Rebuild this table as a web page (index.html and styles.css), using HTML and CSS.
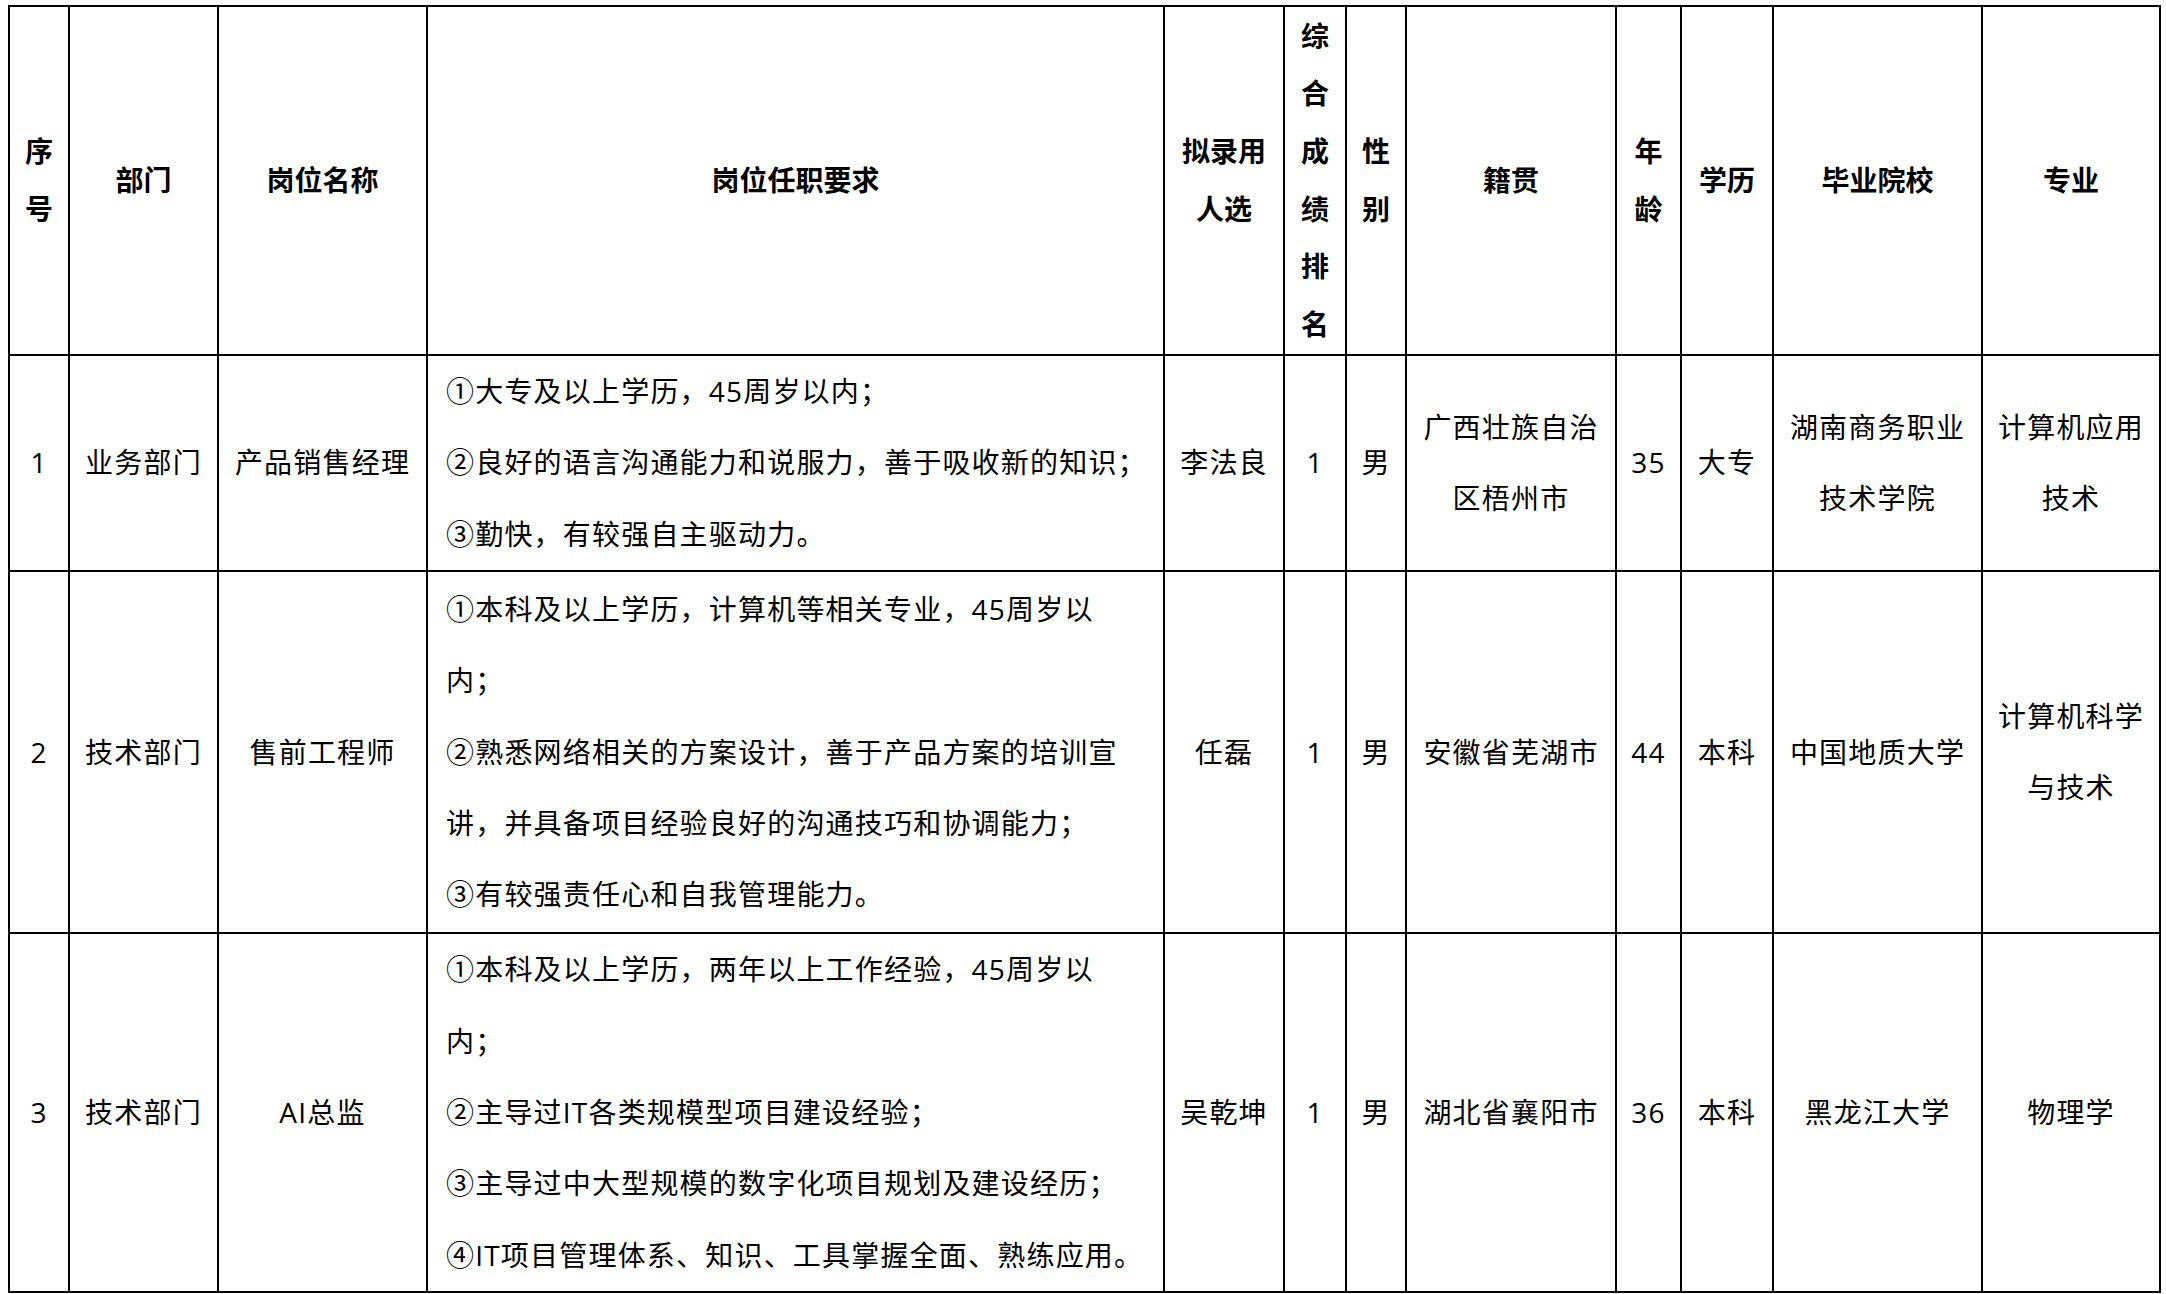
FILE: index.html
```html
<!DOCTYPE html>
<html lang="zh-CN">
<head>
<meta charset="utf-8">
<title>拟录用人员名单</title>
<link rel="stylesheet" href="styles.css">
</head>
<body>
<table class="roster">
  <colgroup>
    <col class="c-no">
    <col class="c-dept">
    <col class="c-post">
    <col class="c-req">
    <col class="c-name">
    <col class="c-rank">
    <col class="c-sex">
    <col class="c-origin">
    <col class="c-age">
    <col class="c-edu">
    <col class="c-school">
    <col class="c-major">
  </colgroup>
  <thead>
    <tr class="head-row">
      <th>序<br>号</th>
      <th>部门</th>
      <th>岗位名称</th>
      <th>岗位任职要求</th>
      <th>拟录用<br>人选</th>
      <th>综<br>合<br>成<br>绩<br>排<br>名</th>
      <th>性<br>别</th>
      <th>籍贯</th>
      <th>年<br>龄</th>
      <th>学历</th>
      <th>毕业院校</th>
      <th>专业</th>
    </tr>
  </thead>
  <tbody>
    <tr class="row-1">
      <td>1</td>
      <td>业务部门</td>
      <td>产品销售经理</td>
      <td class="req">
        <div class="req-line">①大专及以上学历，45周岁以内；</div>
        <div class="req-line">②良好的语言沟通能力和说服力，善于吸收新的知识；</div>
        <div class="req-line">③勤快，有较强自主驱动力。</div>
      </td>
      <td>李法良</td>
      <td>1</td>
      <td>男</td>
      <td>广西壮族自治<br>区梧州市</td>
      <td>35</td>
      <td>大专</td>
      <td>湖南商务职业<br>技术学院</td>
      <td>计算机应用<br>技术</td>
    </tr>
    <tr class="row-2">
      <td>2</td>
      <td>技术部门</td>
      <td>售前工程师</td>
      <td class="req">
        <div class="req-line">①本科及以上学历，计算机等相关专业，45周岁以</div>
        <div class="req-line">内；</div>
        <div class="req-line">②熟悉网络相关的方案设计，善于产品方案的培训宣</div>
        <div class="req-line">讲，并具备项目经验良好的沟通技巧和协调能力；</div>
        <div class="req-line">③有较强责任心和自我管理能力。</div>
      </td>
      <td>任磊</td>
      <td>1</td>
      <td>男</td>
      <td>安徽省芜湖市</td>
      <td>44</td>
      <td>本科</td>
      <td>中国地质大学</td>
      <td>计算机科学<br>与技术</td>
    </tr>
    <tr class="row-3">
      <td>3</td>
      <td>技术部门</td>
      <td>AI总监</td>
      <td class="req">
        <div class="req-line">①本科及以上学历，两年以上工作经验，45周岁以</div>
        <div class="req-line">内；</div>
        <div class="req-line">②主导过IT各类规模型项目建设经验；</div>
        <div class="req-line">③主导过中大型规模的数字化项目规划及建设经历；</div>
        <div class="req-line">④IT项目管理体系、知识、工具掌握全面、熟练应用。</div>
      </td>
      <td>吴乾坤</td>
      <td>1</td>
      <td>男</td>
      <td>湖北省襄阳市</td>
      <td>36</td>
      <td>本科</td>
      <td>黑龙江大学</td>
      <td>物理学</td>
    </tr>
  </tbody>
</table>
</body>
</html>
```

FILE: styles.css
```css
html, body {
  margin: 0;
  padding: 0;
  background: #ffffff;
}

body {
  font-family: "Open Sans", "Noto Sans CJK SC", sans-serif;
  color: #000000;
}

.roster {
  margin: 5px 0 0 8px;
  width: 2153px;
  table-layout: fixed;
  border-collapse: collapse;
  font-size: 28px;
}

.c-no { width: 60px; }
.c-dept { width: 149px; }
.c-post { width: 209px; }
.c-req { width: 737px; }
.c-name { width: 120px; }
.c-rank { width: 62px; }
.c-sex { width: 60px; }
.c-origin { width: 210px; }
.c-age { width: 65px; }
.c-edu { width: 92px; }
.c-school { width: 209px; }
.c-major { width: 178px; }

.roster th,
.roster td {
  border: 2px solid #000;
  padding: 0;
  text-align: center;
  vertical-align: middle;
  white-space: nowrap;
  overflow: hidden;
}

.roster th {
  font-weight: 700;
  line-height: 57.6px;
}

.roster td {
  font-weight: 400;
  line-height: 71.4px;
  letter-spacing: 1.2px;
}

.head-row { height: 349px; }
.row-1 { height: 215px; }
.row-2 { height: 362px; }
.row-3 { height: 359px; }

.roster td.req {
  text-align: left;
  padding-left: 18px;
}

.req-line {
  white-space: nowrap;
}
```
